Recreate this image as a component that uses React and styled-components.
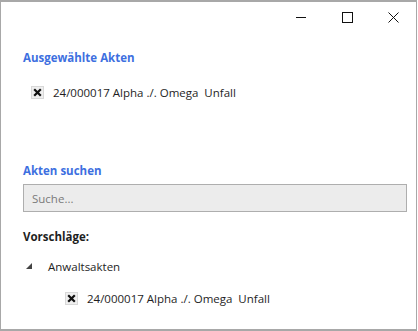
import React from "react";
import styled, { createGlobalStyle } from "styled-components";

const GlobalStyle = createGlobalStyle`
  html, body {
    margin: 0;
    padding: 0;
    background: #ffffff;
  }
  body {
    font-family: "Open Sans", "Noto Sans", "DejaVu Sans", sans-serif;
    font-size: 11.5px;
    color: #1e1e1e;
  }
`;

const Window = styled.div`
  box-sizing: border-box;
  width: 417px;
  height: 331px;
  border: 1px solid #a8a8a8;
  border-top-width: 2px;
  border-bottom-width: 2px;
  background: #fff;
  display: flex;
  flex-direction: column;
`;

const TitleBar = styled.div`
  display: flex;
  justify-content: flex-end;
  height: 30px;
  flex-shrink: 0;
`;

const CaptionButton = styled.div`
  width: 46px;
  height: 30px;
  display: flex;
  align-items: center;
  justify-content: center;
`;

const Content = styled.div`
  display: flex;
  flex-direction: column;
  padding: 18px 9px 0 22px;
`;

const SectionTitle = styled.div`
  font-weight: 700;
  font-size: 11.5px;
  line-height: 16px;
  color: ${({ $blue }) => ($blue ? "#3d6fe0" : "#1e1e1e")};
  margin-top: ${({ $top }) => $top || 0}px;
`;

const ItemRow = styled.div`
  display: flex;
  align-items: center;
  gap: 9px;
  height: 18px;
  margin-top: ${({ $top }) => $top || 0}px;
  padding-left: ${({ $indent }) => $indent || 0}px;
`;

const Check = styled.div`
  box-sizing: border-box;
  width: 13px;
  height: 13px;
  border: 1px solid #d8d8d8;
  background: #efefef;
  display: flex;
  align-items: center;
  justify-content: center;
`;

const ItemText = styled.span`
  white-space: pre;
  font-size: 11.5px;
  color: #1e1e1e;
`;

const SearchBox = styled.div`
  box-sizing: border-box;
  height: 28px;
  margin-top: 5px;
  border: 1px solid #aeaeae;
  background: #ececec;
  display: flex;
  align-items: center;
  padding-left: 8px;
  color: #7a7a7a;
  font-size: 11.5px;
`;

const TreeRow = styled.div`
  display: flex;
  align-items: center;
  height: 18px;
  margin-top: ${({ $top }) => $top || 0}px;
  padding-left: 3px;
`;

const Expander = styled.div`
  width: 22px;
  display: flex;
  align-items: center;
`;

const CheckMark = () => (
  <svg width="9" height="9" viewBox="0 0 9 9">
    <path d="M1.2 1.2 L7.8 7.8 M7.8 1.2 L1.2 7.8" stroke="#111" strokeWidth="2.2" />
  </svg>
);

const SelectedItem = ({ text, top, indent }) => (
  <ItemRow $top={top} $indent={indent}>
    <Check>
      <CheckMark />
    </Check>
    <ItemText>{text}</ItemText>
  </ItemRow>
);

const label = "24/000017 Alpha ./. Omega  Unfall";

export default function App() {
  return (
    <>
      <GlobalStyle />
      <Window>
        <TitleBar>
          <CaptionButton>
            <svg width="11" height="11" viewBox="0 0 11 11">
              <path d="M0 5.5 H10" stroke="#111" strokeWidth="1" />
            </svg>
          </CaptionButton>
          <CaptionButton>
            <svg width="11" height="11" viewBox="0 0 11 11">
              <rect x="0.5" y="0.5" width="10" height="10" fill="none" stroke="#111" />
            </svg>
          </CaptionButton>
          <CaptionButton>
            <svg width="11" height="11" viewBox="0 0 11 11">
              <path d="M0.5 0.5 L10.5 10.5 M10.5 0.5 L0.5 10.5" stroke="#111" strokeWidth="1" />
            </svg>
          </CaptionButton>
        </TitleBar>
        <Content>
          <SectionTitle $blue>Ausgewählte Akten</SectionTitle>
          <SelectedItem text={label} top={17} indent={8} />
          <SectionTitle $blue $top={62}>
            Akten suchen
          </SectionTitle>
          <SearchBox>Suche...</SearchBox>
          <SectionTitle $top={17}>Vorschläge:</SectionTitle>
          <TreeRow $top={12}>
            <Expander>
              <svg width="6" height="6" viewBox="0 0 6 6">
                <path d="M6 0 L6 6 L0 6 Z" fill="#444" />
              </svg>
            </Expander>
            <ItemText>Anwaltsakten</ItemText>
          </TreeRow>
          <SelectedItem text={label} top={14} indent={42} />
        </Content>
      </Window>
    </>
  );
}
